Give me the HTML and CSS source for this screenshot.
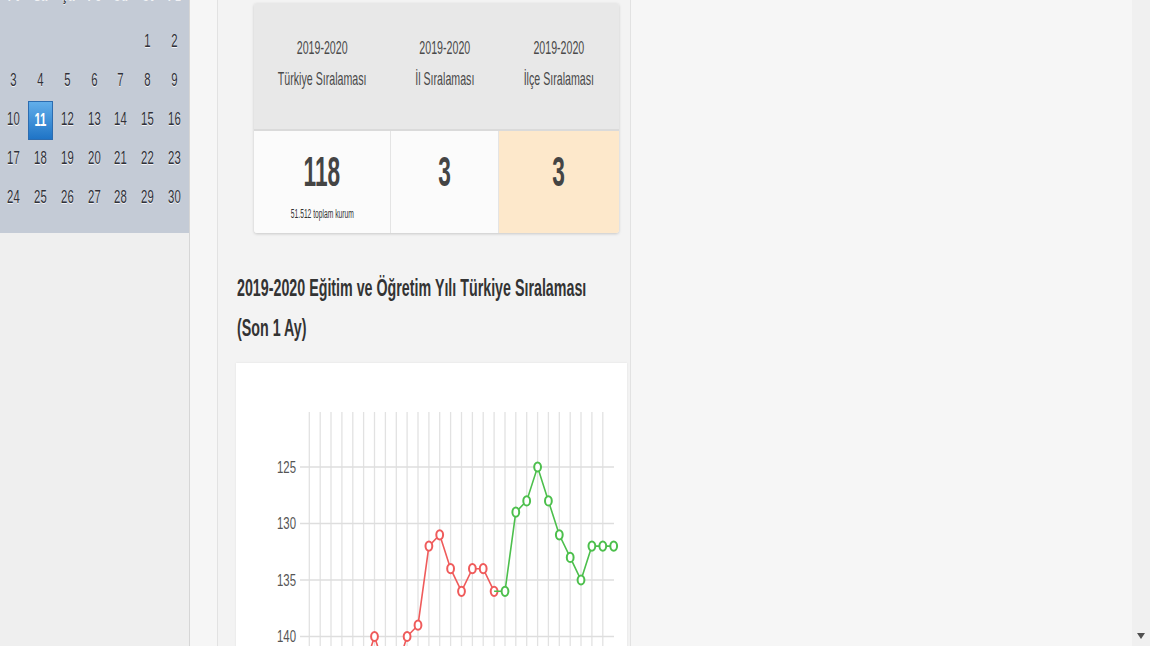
FILE: index.html
```html
<!DOCTYPE html>
<html lang="tr">
<head>
  <meta charset="UTF-8" />
  <meta name="viewport" content="width=device-width, initial-scale=1.0" />
  <title>Kurum Sıralaması</title>
  <link rel="stylesheet" href="styles.css">
</head>
<body>
  <div class="page">
    <aside class="sidebar">
      <div class="calendar">
        <div class="cal-head">
          <span>Pt</span><span>Sa</span><span>Ça</span><span>Pe</span><span>Cu</span><span>Ct</span><span>Pz</span>
        </div>
        <div class="cal-grid">
          <span></span><span></span><span></span><span></span><span></span><span>1</span><span>2</span>
          <span>3</span><span>4</span><span>5</span><span>6</span><span>7</span><span>8</span><span>9</span>
          <span>10</span><span class="today"><i>11</i></span><span>12</span><span>13</span><span>14</span><span>15</span><span>16</span>
          <span>17</span><span>18</span><span>19</span><span>20</span><span>21</span><span>22</span><span>23</span>
          <span>24</span><span>25</span><span>26</span><span>27</span><span>28</span><span>29</span><span>30</span>
        </div>
      </div>
    </aside>

    <div class="gutter"></div>

    <main class="content">
      <div class="stats">
        <div class="stats-row stats-head">
          <div><span class="sq">2019-2020<br>Türkiye Sıralaması</span></div>
          <div><span class="sq">2019-2020<br>İl Sıralaması</span></div>
          <div><span class="sq">2019-2020<br>İlçe Sıralaması</span></div>
        </div>
        <div class="stats-row stats-body">
          <div>
            <span class="num sq">118</span>
            <span class="total sq">51.512 toplam kurum</span>
          </div>
          <div><span class="num sq">3</span></div>
          <div class="peach"><span class="num sq">3</span></div>
        </div>
      </div>

      <h2 class="chart-title">2019-2020 Eğitim ve Öğretim Yılı Türkiye Sıralaması<br>(Son 1 Ay)</h2>

      <div class="chart-card">
        <svg id="chart" width="391" height="300" viewBox="236 363 391 300" xmlns="http://www.w3.org/2000/svg"></svg>
      </div>
    </main>

    <div class="rest"></div>
    <div class="scrollbar"><span class="arrow"></span></div>
  </div>

  <script>
    // Son 1 ay sıralama verisi (index, sıra)
    const red = [[5,143],[6,140],[7,143],[8,143],[9,140],[10,139],[11,132],[12,131],[13,134],[14,136],[15,134],[16,134],[17,136]];
    const green = [[17,136],[18,136],[19,129],[20,128],[21,125],[22,128],[23,131],[24,133],[25,135],[26,132],[27,132],[28,132]];
    const X0 = 309.3, STEP = 10.87, Y0 = 467, UNIT = 11.3;
    const px = i => (X0 + i * STEP).toFixed(1);
    const py = v => (Y0 + (v - 125) * UNIT).toFixed(1);
    let out = '';
    for (let i = 0; i < 28; i++) {
      out += `<line x1="${px(i)}" x2="${px(i)}" y1="412" y2="700" stroke="#e2e2e2" stroke-width="1.3"/>`;
    }
    [125, 130, 135, 140].forEach(v => {
      out += `<line x1="300" x2="614" y1="${py(v)}" y2="${py(v)}" stroke="#dedede" stroke-width="1.5"/>`;
      out += `<text x="296" y="${py(v)}" dy="5.5" text-anchor="end" font-size="16" fill="#555" textLength="19" lengthAdjust="spacingAndGlyphs">${v}</text>`;
    });
    function series(data, color, skipFirst) {
      out += `<polyline fill="none" stroke="${color}" stroke-width="1.6" points="${data.map(d => px(d[0]) + ',' + py(d[1])).join(' ')}"/>`;
      data.forEach((d, k) => {
        if (skipFirst && k === 0) return;
        out += `<ellipse cx="${px(d[0])}" cy="${py(d[1])}" rx="3.4" ry="4.6" fill="#fff" stroke="${color}" stroke-width="2"/>`;
      });
    }
    series(red, '#ef5b5b', false);
    series(green, '#4cbf4c', true);
    document.getElementById('chart').innerHTML = out;
  </script>
</body>
</html>
```

FILE: styles.css
```css
* { box-sizing: border-box; }
html, body {
  margin: 0;
  height: 100%;
  overflow: hidden;
}
body {
  font-family: "Liberation Sans", Arial, sans-serif;
  background: #f6f6f6;
  color: #333;
}
.page { display: flex; height: 646px; }

/* Sidebar calendar */
.sidebar {
  width: 190px;
  flex: none;
  background: #efefef;
  border-right: 1px solid #d6d6d6;
}
.calendar { background: #c4cbd6; padding-bottom: 16px; }
.cal-head, .cal-grid { display: grid; grid-template-columns: repeat(7, 26.86px); }
.cal-head { margin-top: -21px; height: 43px; line-height: 30px; font-weight: bold; }
.cal-grid { grid-auto-rows: 39px; }
.cal-head span, .cal-grid span {
  text-align: center;
  font-size: 18px;
  color: #2f3038;
  text-shadow: 0 1px 0 rgba(255,255,255,.8);
  transform: scaleX(.63);
}
.cal-grid span { line-height: 39px; }
.cal-grid .today {
  transform: none;
  margin: 1px 1px -1px 1px;
  line-height: 37px;
  border: 1px solid #2c6cb0;
  background: linear-gradient(#62aeea, #1f74c6);
  text-shadow: none;
}
.cal-grid .today i {
  display: block;
  font-style: normal;
  font-weight: bold;
  color: #fff;
  transform: scaleX(.63);
}

.gutter { width: 27px; flex: none; background: #f6f6f6; }

/* Main column */
.content {
  width: 414px;
  flex: none;
  background: #f3f3f3;
  border-left: 1px solid #e2e2e2;
  border-right: 1px solid #e2e2e2;
}
.sq { display: inline-block; white-space: nowrap; transform: scaleX(.56); }

.stats {
  margin: 3px 11px 0 36px;
  border-radius: 3px;
  overflow: hidden;
  box-shadow: 0 1px 3px rgba(0,0,0,.18);
}
.stats-row { display: grid; grid-template-columns: 137px 108px 120px; }
.stats-head {
  height: 128px;
  padding-bottom: 6px;
  background: #e8e8e8;
  border-bottom: 2px solid #dadada;
}
.stats-head div {
  display: flex;
  align-items: center;
  justify-content: center;
  text-align: center;
  font-size: 19px;
  line-height: 31px;
  color: #4a4a4a;
}
.stats-body { height: 102px; }
.stats-body div {
  display: flex;
  flex-direction: column;
  align-items: center;
  padding-top: 20px;
  background: #fbfbfb;
  border-right: 1px solid #e4e4e4;
}
.stats-body div:last-child { border-right: none; }
.stats-body .peach { background: #fde8cb; }
.num { font-size: 42px; line-height: 42px; font-weight: bold; color: #444; transform: scaleX(.54); }
.total { margin-top: 14px; font-size: 12px; line-height: 14px; color: #333; }

.chart-title {
  margin: 35px 0 15px 19px;
  font-size: 23px;
  line-height: 40px;
  font-weight: bold;
  color: #333;
  white-space: nowrap;
  transform: scaleX(.62);
  transform-origin: left;
}
.chart-card {
  margin-left: 18px;
  width: 391px;
  height: 300px;
  background: #fff;
  box-shadow: 0 0 2px rgba(0,0,0,.08);
}
.chart-card svg { display: block; font-family: "Liberation Sans", Arial, sans-serif; }

.rest { flex: 1; background: #f6f6f6; }
.scrollbar {
  width: 18px;
  flex: none;
  background: #f0f0f0;
  display: flex;
  align-items: flex-end;
  justify-content: center;
  padding-bottom: 7px;
}
.arrow {
  border-left: 4px solid transparent;
  border-right: 4px solid transparent;
  border-top: 6px solid #505050;
}
```
